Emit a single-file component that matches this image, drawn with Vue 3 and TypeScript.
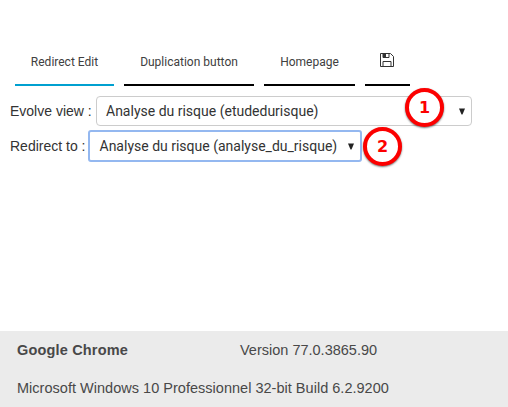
<script setup lang="ts">
interface Tab {
  id: string
  label: string
}

interface Field {
  id: string
  label: string
  value: string
  step: number
}

const tabs: Tab[] = [
  { id: 'redirect', label: 'Redirect Edit' },
  { id: 'duplication', label: 'Duplication button' },
  { id: 'homepage', label: 'Homepage' },
]

const fields: Field[] = [
  { id: 'view', label: 'Evolve view :', value: 'Analyse du risque (etudedurisque)', step: 1 },
  { id: 'target', label: 'Redirect to :', value: 'Analyse du risque (analyse_du_risque)', step: 2 },
]
</script>

<template>
  <div class="page">
    <nav class="tabs">
      <a v-for="(tab, i) in tabs" :key="tab.id" class="tab" :class="[tab.id, { active: i === 0 }]">{{ tab.label }}</a>
      <a class="tab save" aria-label="Save">
        <svg width="14" height="14" viewBox="0 0 14 14" fill="none" stroke="#333" stroke-width="1">
          <path d="M.5.5H10.5L13.5 3.5V13.5H.5Z" />
          <path d="M3 .5V4.5H9V.5" />
          <path d="M3 .5H6V4.5H3Z" fill="#333" stroke="none" />
          <path d="M3 13.5V8.5H11V13.5" />
        </svg>
      </a>
    </nav>

    <main class="form">
      <div v-for="field in fields" :key="field.id" class="row" :class="field.id">
        <span class="label">{{ field.label }}</span>
        <div class="select" role="combobox" tabindex="-1">
          <span class="value">{{ field.value }}</span>
          <svg class="arrow" width="6" height="7" viewBox="0 0 6 7"><path d="M0 .5H6L3.5 6.5H2.5Z" fill="#222" /></svg>
        </div>
        <span class="badge">{{ field.step }}</span>
      </div>
    </main>

    <footer class="info">
      <div class="browser">
        <strong>Google Chrome</strong>
        <span>Version 77.0.3865.90</span>
      </div>
      <div class="system">Microsoft Windows 10 Professionnel 32-bit Build 6.2.9200</div>
    </footer>
  </div>
</template>

<style>
body {
  margin: 0;
  background: #fff;
}
</style>

<style scoped>
.page {
  box-sizing: border-box;
  display: flex;
  flex-direction: column;
  height: 407px;
  padding-top: 38px;
  overflow: hidden;
  color: #333;
  font-family: "Liberation Sans", Arial, sans-serif;
  font-size: 14px;
  white-space: nowrap;
}

.tabs {
  display: flex;
  gap: 10px;
  padding-left: 15px;
}

.tab {
  box-sizing: border-box;
  display: flex;
  justify-content: center;
  height: 48px;
  border-bottom: 2px solid #000;
  color: #404040;
  font: 12px/48px Roboto, sans-serif;
}

.tab.active {
  border-color: #00a0d0;
}

.redirect { width: 99px; }
.duplication { width: 130px; }
.homepage { width: 91px; }

.save {
  width: 45px;
  padding: 15px 1px 0 0;
}

.form {
  padding: 10px 0 0 10px;
}

.row {
  position: relative;
  display: flex;
  align-items: center;
}

.target {
  margin-top: 4px;
}

.label {
  width: 86px;
}

.target .label {
  width: 78px;
}

.select {
  box-sizing: border-box;
  display: flex;
  align-items: center;
  justify-content: space-between;
  width: 376px;
  height: 30px;
  padding: 0 6px 0 9px;
  border: 1px solid #ccc;
  border-radius: 4px;
  background: #fff;
  font-family: Roboto, sans-serif;
  font-size: 14px;
}

.target .select {
  width: 274px;
  height: 32px;
  padding-left: 9.5px;
  border: 2px solid #94b8f0;
  border-radius: 3px;
}

.badge {
  position: absolute;
  top: -8px;
  left: 395px;
  box-sizing: border-box;
  width: 39px;
  height: 39px;
  border: 4px solid #fc0000;
  border-radius: 50%;
  background: #fff;
  box-shadow: 0 1px 2px rgba(0, 0, 0, 0.55);
  color: #fc0000;
  font: bold 16px/31px "DejaVu Sans", Verdana, sans-serif;
  text-align: center;
}

.target .badge {
  top: -3px;
  left: 353px;
}

.info {
  box-sizing: border-box;
  height: 76px;
  margin-top: auto;
  padding: 10px 17px 0;
  background: #ebebeb;
  color: #484848;
  font-size: 14.5px;
  line-height: 18px;
}

.browser {
  display: grid;
  grid-template-columns: 223px auto;
}

.browser strong {
  letter-spacing: 0.17px;
}

.system {
  margin-top: 20px;
  letter-spacing: 0.02px;
}
</style>
